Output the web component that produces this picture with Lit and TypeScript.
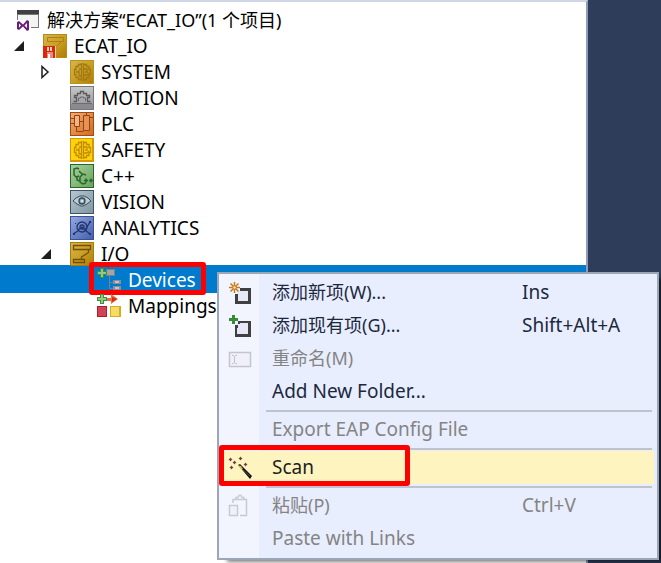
import { LitElement, html, svg, css, nothing } from "lit";
import { customElement } from "lit/decorators.js";
import { classMap } from "lit/directives/class-map.js";

const defs = svg`<defs>
  <linearGradient id="gold" x2="1" y2="1"><stop offset="0" stop-color="#d6b34c"/><stop offset=".5" stop-color="#cb9f24"/><stop offset="1" stop-color="#ae7d08"/></linearGradient>
  <linearGradient id="grey" x2="0" y2="1"><stop offset="0" stop-color="#c6c6c9"/><stop offset="1" stop-color="#929296"/></linearGradient>
  <linearGradient id="orange" x2="1" y2="1"><stop offset="0" stop-color="#f0ad78"/><stop offset="1" stop-color="#d46a1c"/></linearGradient>
  <linearGradient id="green" x2="1" y2="1"><stop offset="0" stop-color="#a9cf9b"/><stop offset="1" stop-color="#68a45c"/></linearGradient>
  <linearGradient id="steel" x2="1" y2="1"><stop offset="0" stop-color="#b4c6ce"/><stop offset="1" stop-color="#8097a2"/></linearGradient>
  <linearGradient id="blue" x2="1" y2="1"><stop offset="0" stop-color="#93a8de"/><stop offset="1" stop-color="#4460ae"/></linearGradient>
</defs>`;

const tile = (fill: string, edge: string) => svg`${defs}
  <rect width="24" height="24" fill=${edge}/>
  <rect x="1" y="1" width="22" height="22" fill=${`url(#${fill})`}/>`;

const brain = (c: string) => svg`<g fill="none" stroke=${c} stroke-width="1.3">
  <path d="M11.500 3v18M13.500 3v18M11 4.500H8.500v2H6v3H4.500v5H6v3h2.500v2H11M14 4.500h2.500v2H19v3h1.500v5H19v3h-2.500v2H14"/>
  <path d="M6 12h3v-2M9 12v4M11 9H9M11 16H9M14 9h3v3h-2M14 15h3l2-2"/></g>`;

const plus = svg`<path d="M3 0h4v3h3v4H7v3H3V7H0V3h3z" fill="#3f8f3f"/><path d="M4 1h2v3h3v2H6v3H4V6H1V4h3z" fill="#8fcb84"/>`;

const icons: Record<string, unknown> = {
  solution: svg`<rect x="2" y="3" width="20" height="17" fill="#f4f4f4"/>
    <path d="M1 2h22v18H15v-1h7V7H2v5H1z" fill="#777"/><path d="M1 2h22v4H1z" fill="#404040"/>
    <rect y="12" width="14" height="11" fill="#fff"/>
    <path d="M1 14l2-1 4 3.500L11 12l2 1v9l-2 1-4-4.500L3 22l-2-1zM3 15.500v4l2-2zM11 15l-2.500 2.500L11 20z" fill="#68217a" fill-rule="evenodd"/>`,
  project: svg`${tile("gold", "#b98a14")}
    <path d="M4.500 3.500h16v4h-16zM18 8l-4 4M13 12v3" fill="none" stroke="#ac8218" stroke-width="1"/>
    <path d="M0 12h12v12H0z" fill="#dc2608"/><path d="M4 13h2v4H4zM7 13h2v4H7z" fill="#f6cfc6"/><path d="M4 18h6v6H4z" fill="#ee8a7a"/><path d="M5 20h2v4H5z" fill="#fff"/><path d="M12 12h1v12h-1z" fill="#ead9a0"/>`,
  system: svg`${tile("gold", "#bd921f")}${brain("#a27a14")}`,
  motion: svg`${tile("grey", "#77777a")}
    <path d="M3.500 15.500h3v-4h-2v-2h3v-2h3v-2h3v2h3v2h3v2h-2v4h3" fill="none" stroke="#5a5a5d" stroke-width="1.300"/>
    <path d="M8.500 15v-3h2v-1h3v1h2v3" fill="none" stroke="#68686b"/><path d="M1 18h22v5H1z" fill="#8b8b8f"/><path d="M2 17h20v1H2z" fill="#6d6d71"/>`,
  plc: svg`${tile("orange", "#a34a0e")}
    <g fill="#efb48a" stroke="#99430b"><path d="M4.500 3.500h5v11h-5z"/><path d="M13.500 3.500h6v15h-6z" fill="#e59258"/><path d="M1 6.500h3M1 11.500h3M6.500 15v4.500h7M9.500 9.500h4M16.500 3V1M19.500 5.500H23" fill="none"/></g>`,
  safety: svg`<rect width="24" height="24" fill="#d69900"/><rect x="1" y="1" width="21" height="21" fill="#ffd20a"/>${brain("#c08c00")}`,
  cpp: svg`${tile("green", "#206b2b")}
    <g fill="none" stroke="#28662c" stroke-width="1.500"><path d="M9 5L7 4 4 5v6l2 2 3-1M16 11l-3-1-3 3v5l3 2 3-1M7 13v3l3 1M9 7l3 3"/><path d="M14 16.500h4M16 14.500v4M19 16.500h4M21 14.500v4"/></g>`,
  vision: svg`${tile("steel", "#3e5560")}
    <path d="M3 11l3-3 4-2h4l4 2 3 3-4 3-4 2h-2l-4-2z" fill="#bdcdd4" stroke="#3a4e59"/><circle cx="12" cy="11" r="3" fill="#91a8b4" stroke="#344b58" stroke-width="1.300"/><circle cx="12" cy="11" r="1.300" fill="#d9e6ec"/>`,
  analytics: svg`${tile("blue", "#3a519a")}
    <g fill="none" stroke="#21346e" stroke-width="1.300"><circle cx="12" cy="11" r="5"/><circle cx="12" cy="11" r="2"/><path d="M3 18l5-3M8 14l4-3 3 3 5-8M15 14l5 4"/></g>
    <path d="M3 17h2v2H3zM19 5h2v2h-2zM19 17h2v2h-2zM5 7h1v1H5z" fill="#21346e"/>`,
  io: svg`${tile("gold", "#a77b0c")}
    <path d="M3.500 3.500h17v4h-17zM3.500 17.500h11v3h-11zM18.500 8v2.500L11.500 15v2" fill="none" stroke="#70500a" stroke-width="1.300"/>`,
  devices: svg`<path d="M9 1h9v7H9z" fill="#7c7f84"/><path d="M10 2h7v5h-7z" fill="#a4a4a6"/>
    <path d="M12.500 8v12.500H16M12.500 14.500H16" fill="none" stroke="#76818d"/>
    <path d="M16 12h8v4h-8zM16 18h8v4h-8z" fill="#8d8d91"/><path d="M18 13h4v2h-4zM18 19h4v2h-4z" fill="#c4c4c8"/>${plus}`,
  mappings: svg`<path d="M9 4h5V0l7 5-7 5V7H9z" fill="#f26b3e"/><path d="M15 3l5 2-5 3z" fill="#c93018"/>${plus}
    <path d="M0 12h10v11H0z" fill="#a91f30"/><path d="M1 13h8v9H1z" fill="#d34254"/><path d="M13 12h11v11H13z" fill="#d9ab24"/><path d="M14 13h8v9h-8z" fill="#f6dc64"/>`,
  newItem: svg`<path d="M12 8.500h9.500v13h-13V13" fill="#e6e8f8" stroke="#404040" stroke-width="3"/>
    <g stroke="#c27d1a" stroke-width="1.500"><path d="M6.500 1v11M1 6.500h11M2.500 2.500l8 8M10.500 2.500l-8 8"/></g><circle cx="6.500" cy="6.500" r="1.200" fill="#f5e4c8"/>`,
  addItem: svg`<path d="M8.500 8.500h13v13h-13z" fill="#e6e8f8" stroke="#404040" stroke-width="3"/><path d="M0 0h11v11H0z" fill="#f2f4fe"/><path d="M9 9h11v11H9z" fill="#e6e8f8"/><path d="M7 11h3V7h2v3h-2v4H7z" fill="#404040"/><path d="M4 1h3v3h3v3H7v3H4V7H1V4h3z" fill="#388a34"/>`,
  rename: svg`<path d="M1.500 5.500h21v14h-21z" fill="#f0f1f8" stroke="#c2c5cf" stroke-width="1.500"/><path d="M4 8.500h1.500l1 1 1-1H9M6.500 9v7M4 16.500h1.500l1-1 1 1H9" fill="none" stroke="#bdc0ca"/>`,
  wand: svg`<path d="M10 9l2-1 12 12-2 3z" fill="#111"/><path d="M10 9l3 1 2 3-2 0z" fill="#d8c24a"/><path d="M14 13l8 7" stroke="#555" fill="none"/>
    <path d="M2 2h1v1h1v1H3v1H2V4H1V3h1zM12 1h1v1h1v1h-1v1h-1V3h-1V2h1zM6 5h1v1h1v1H7v1H6V7H5V6h1zM3 10h1v1h1v1H4v1H3v-1H2v-1h1zM17 7h1v1h1v1h-1v1h-1V9h-1V8h1z" fill="#6f3440" stroke="#8a5560" stroke-width=".4"/>`,
  paste: svg`<path d="M5 9V5.500h13.500v16H12" fill="none" stroke="#c7cad4" stroke-width="1.500"/><path d="M8 6V3.500h2l1-2h2l1 2h2V6" fill="none" stroke="#c7cad4" stroke-width="1.500"/><path d="M1.500 11.500h8v10h-8z" fill="#f0f1f8" stroke="#c7cad4" stroke-width="1.500"/>`,
};

const icon = (name: string) =>
  html`<svg class="icon" viewBox="0 0 24 24" aria-hidden="true">${icons[name]}</svg>`;

const isChinese = (text: string) => /[\u4e00-\u9fff]/.test(text);

interface TreeNode {
  label: string;
  icon: string;
  level: number;
  arrow?: "open" | "closed";
  selected?: boolean;
}

interface MenuEntry {
  label?: string;
  icon?: string;
  keys?: string;
  disabled?: boolean;
  hot?: boolean;
}

const nodes: TreeNode[] = [
  { label: "解决方案“ECAT_IO”(1 个项目)", icon: "solution", level: 0 },
  { label: "ECAT_IO", icon: "project", level: 1, arrow: "open" },
  { label: "SYSTEM", icon: "system", level: 2, arrow: "closed" },
  { label: "MOTION", icon: "motion", level: 2 },
  { label: "PLC", icon: "plc", level: 2 },
  { label: "SAFETY", icon: "safety", level: 2 },
  { label: "C++", icon: "cpp", level: 2 },
  { label: "VISION", icon: "vision", level: 2 },
  { label: "ANALYTICS", icon: "analytics", level: 2 },
  { label: "I/O", icon: "io", level: 2, arrow: "open" },
  { label: "Devices", icon: "devices", level: 3, selected: true },
  { label: "Mappings", icon: "mappings", level: 3 },
];

const entries: MenuEntry[] = [
  { label: "添加新项(W)...", icon: "newItem", keys: "Ins" },
  { label: "添加现有项(G)...", icon: "addItem", keys: "Shift+Alt+A" },
  { label: "重命名(M)", icon: "rename", disabled: true },
  { label: "Add New Folder..." },
  {},
  { label: "Export EAP Config File", disabled: true },
  {},
  { label: "Scan", icon: "wand", hot: true },
  {},
  { label: "粘贴(P)", icon: "paste", keys: "Ctrl+V", disabled: true },
  { label: "Paste with Links", disabled: true },
];

@customElement("solution-tree")
class SolutionTree extends LitElement {
  static styles = css`
    :host { display: block; }
    .tree { margin: 0; padding: 5px 0; list-style: none; }
    .row { display: flex; align-items: center; height: 26px; color: #000; white-space: nowrap; }
    .level0 { padding-left: 16px; }
    .level1 { padding-left: 14px; }
    .level2 { padding-left: 41px; }
    .level3 { padding-left: 68px; }
    .selected { background: #007acc; color: #fff; box-shadow: 0 -2px #007acc; }
    .twisty { flex: none; width: 29px; height: 26px; padding: 0; border: 0; background: none; display: flex; align-items: center; }
    .arrow { width: 10px; height: 14px; }
    .icon { flex: none; width: 24px; height: 24px; margin-right: 7px; }
    .target { position: relative; display: flex; align-items: center; }
    .zh { font-size: 18px; }
    .mark { position: absolute; inset: -5px -10px -2px -8px; border: 5px solid #f00; border-radius: 3px; pointer-events: none; }
  `;

  private twisty(n: TreeNode) {
    if (n.level === 0) return nothing;
    if (!n.arrow) return html`<span class="twisty"></span>`;
    const open = n.arrow === "open";
    return html`<button class="twisty" aria-label=${`${open ? "Collapse" : "Expand"} ${n.label}`}>
      <svg class="arrow" viewBox="0 0 10 14">
        ${open
          ? svg`<path d="M10 2v10H0z" fill="#1e1e1e"/>`
          : svg`<path d="M1 1.500v11l6-5.500z" fill="#fff" stroke="#1e1e1e" stroke-width="1.500"/>`}
      </svg>
    </button>`;
  }

  render() {
    return html`<ul class="tree" role="tree">
      ${nodes.map(
        (n) => html`<li
          role="treeitem"
          aria-selected=${n.selected ? "true" : "false"}
          class=${classMap({ row: true, [`level${n.level}`]: true, selected: !!n.selected })}
        >
          ${this.twisty(n)}
          <span class="target">${icon(n.icon)}<span class=${classMap({ zh: isChinese(n.label) })}>${n.label}</span>${n.selected ? html`<span class="mark"></span>` : nothing}</span>
        </li>`
      )}
    </ul>`;
  }
}

@customElement("context-menu")
class ContextMenu extends LitElement {
  static styles = css`
    :host { display: block; }
    .menu {
      box-sizing: border-box; padding: 2px 0 3px; border: 2px solid #9ba7b7; color: #1b293e;
      background: linear-gradient(to right, #f2f4fe 40px, #e9eefe 40px);
      box-shadow: 8px 4px 4px -2px rgba(0, 0, 0, 0.5);
    }
    .item {
      display: grid; grid-template-columns: 40px 250px 1fr; align-items: center; box-sizing: border-box;
      width: calc(100% - 5px); height: 33px; margin: 0 3px 0 2px; padding: 0 0 0 7px; border: 0;
      background: none; font: inherit; color: inherit; text-align: left; white-space: nowrap; position: relative;
    }
    .item:disabled { color: #848484; }
    .hot { background: #fdf4bf; color: #1e1e1e; }
    .icon { width: 24px; height: 24px; }
    .sep { height: 2px; margin: 2px 5px 1px 47px; border: 0; background: #bec3cd; }
    .label, .keys { padding: 0 0 2px 4px; }
    .zh { font-size: 18px; }
    .mark { position: absolute; left: -2px; width: 191px; top: -6px; bottom: -2px; box-sizing: border-box; border: 5px solid #f00; border-radius: 3px; pointer-events: none; }
  `;

  render() {
    return html`<div class="menu" role="menu">
      ${entries.map((e) =>
        e.label
          ? html`<button role="menuitem" class=${classMap({ item: true, hot: !!e.hot })} ?disabled=${!!e.disabled}>
              <span class="icon">${e.icon ? icon(e.icon) : nothing}</span>
              <span class=${classMap({ label: true, zh: isChinese(e.label) })}>${e.label}</span>
              <span class="keys">${e.keys ?? nothing}</span>
              ${e.hot ? html`<span class="mark"></span>` : nothing}
            </button>`
          : html`<hr class="sep" />`
      )}
    </div>`;
  }
}

@customElement("app-root")
class AppRoot extends LitElement {
  static styles = css`
    :host {
      display: flex; position: relative; min-height: 100vh; overflow: hidden; background: #2d3d5a;
      font: 19px/26px "Noto Sans", "Noto Sans CJK SC", sans-serif;
    }
    .panel { flex: 1; min-width: 0; background: #fff; border-top: 2px solid #cfd6e5; border-right: 2px solid #8e9bbc; }
    .side { flex: none; width: 73px; }
    .popup { position: absolute; left: 217px; right: 2px; top: 272px; }
  `;

  render() {
    return html`<main class="panel"><solution-tree></solution-tree></main>
      <aside class="side"></aside>
      <context-menu class="popup"></context-menu>`;
  }
}
